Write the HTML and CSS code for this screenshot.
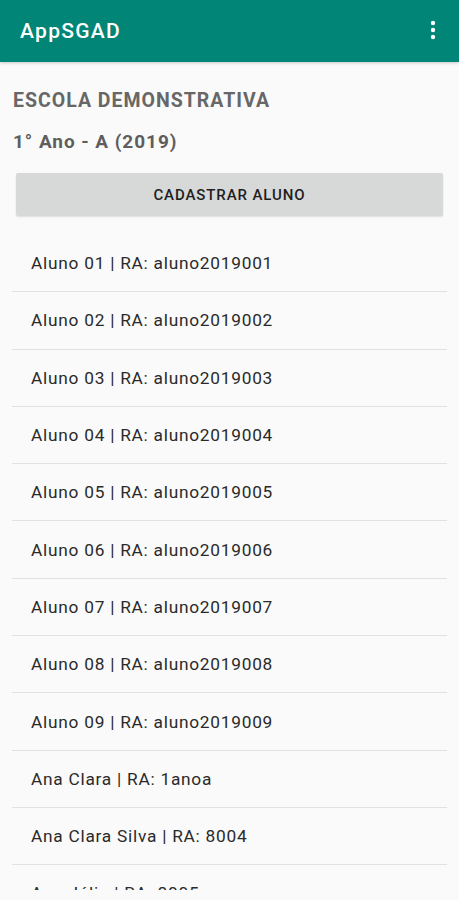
FILE: index.html
```html
<!DOCTYPE html>
<html lang="pt-BR">
<head>
  <meta charset="UTF-8">
  <meta name="viewport" content="width=device-width, initial-scale=1.0">
  <link rel="stylesheet" href="styles.css">
</head>
<body>

<div class="app">
  <header class="toolbar">
    <span class="toolbar-title">AppSGAD</span>
    <span class="menu-button">
      <svg width="6" height="20" viewBox="0 0 6 20">
        <circle cx="3" cy="3" r="2.2" fill="#fff"/>
        <circle cx="3" cy="10" r="2.2" fill="#fff"/>
        <circle cx="3" cy="17" r="2.2" fill="#fff"/>
      </svg>
    </span>
  </header>

  <main class="content">
    <div class="clip">
      <h1 class="school">ESCOLA DEMONSTRATIVA</h1>
      <h2 class="class-name">1° Ano - A (2019)</h2>

      <button class="btn-add">CADASTRAR ALUNO</button>

      <ul class="student-list">
        <li>Aluno 01 | RA: aluno2019001</li>
        <li>Aluno 02 | RA: aluno2019002</li>
        <li>Aluno 03 | RA: aluno2019003</li>
        <li>Aluno 04 | RA: aluno2019004</li>
        <li>Aluno 05 | RA: aluno2019005</li>
        <li>Aluno 06 | RA: aluno2019006</li>
        <li>Aluno 07 | RA: aluno2019007</li>
        <li>Aluno 08 | RA: aluno2019008</li>
        <li>Aluno 09 | RA: aluno2019009</li>
        <li>Ana Clara | RA: 1anoa</li>
        <li>Ana Clara Silva | RA: 8004</li>
        <li>Ana Júlia | RA: 8005</li>
      </ul>
    </div>
  </main>
</div>

</body>
</html>
```

FILE: styles.css
```css
body {
  margin: 0;
  font-family: 'Roboto', 'Liberation Sans', sans-serif;
  background-color: #fafafa;
  overflow: hidden;
}

.app {
  height: 900px;
  display: flex;
  flex-direction: column;
}

.toolbar {
  height: 62px;
  flex-shrink: 0;
  background-color: #008577;
  display: flex;
  align-items: center;
  justify-content: space-between;
  padding: 0 23px 0 20px;
  box-shadow: 0 1px 3px rgba(0, 0, 0, 0.2);
  position: relative;
  z-index: 1;
}

.toolbar-title {
  color: #fff;
  font-size: 21px;
  font-weight: 500;
  letter-spacing: 1.3px;
  margin-top: -1px;
}

.menu-button {
  display: flex;
  margin-top: -2px;
}

.content {
  flex: 1;
  padding-bottom: 10px;
  display: flex;
  flex-direction: column;
  min-height: 0;
}

.clip {
  flex: 1;
  overflow: hidden;
  padding: 0 12px;
}

.school {
  margin: 27px 0 0 1px;
  font-size: 19.5px;
  font-weight: 700;
  letter-spacing: 1px;
  color: #676767;
  line-height: 24px;
}

.class-name {
  margin: 17px 0 0 1px;
  font-size: 19px;
  font-weight: 700;
  letter-spacing: 0.95px;
  color: #5e5e5e;
  line-height: 24px;
}

.btn-add {
  display: block;
  width: calc(100% - 8px);
  height: 43px;
  margin: 19px 4px 0 4px;
  border: none;
  border-radius: 2px;
  background-color: #d7d8d8;
  color: #1e1e1e;
  font-family: 'Roboto', 'Liberation Sans', sans-serif;
  font-size: 15px;
  font-weight: 500;
  letter-spacing: 0.9px;
  box-shadow: 0 1px 2px rgba(0, 0, 0, 0.12);
}

.student-list {
  list-style: none;
  margin: 19px 0 0 0;
  padding: 0;
}

.student-list li {
  height: 56.3px;
  display: flex;
  align-items: center;
  padding-left: 19px;
  font-size: 17.3px;
  letter-spacing: 0.75px;
  color: #2a2a2a;
  border-bottom: 1px solid #e2e2e2;
}
```
